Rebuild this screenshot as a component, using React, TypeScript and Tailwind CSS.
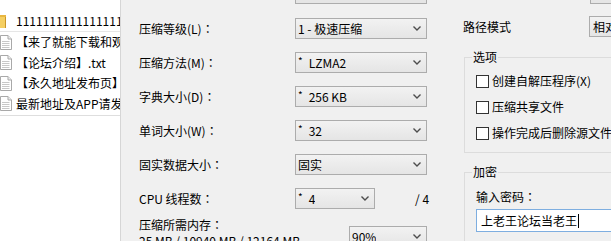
import React from 'react';

const FONT = { fontFamily: '"Noto Sans CJK SC", "Noto Sans", sans-serif' };

// full-width colon, centred like the Windows UI font does it
function Colon() {
  return <span style={{ fontFamily: '"Noto Sans CJK JP", sans-serif' }}>：</span>;
}

function Chevron() {
  return (
    <svg width="8" height="5" viewBox="0 0 8 5" className="shrink-0">
      <path d="M0.5 0.5 L4 4 L7.5 0.5" fill="none" stroke="#4d4d4d" strokeWidth="1.4" />
    </svg>
  );
}

function Select({ value, width, star }: { value: string; width: string; star?: boolean }) {
  return (
    <div
      className={`${width} h-[21px] shrink-0 flex items-center justify-between pl-[2px] pr-[5px] border border-[#acacac] bg-linear-to-b from-[#f2f2f2] to-[#e5e5e5]`}
    >
      <span className="flex items-center whitespace-nowrap overflow-hidden leading-none">
        {star && <span className="mr-[6px] text-[10px] -mt-[3px]">*</span>}
        {value}
      </span>
      <Chevron />
    </div>
  );
}

function FolderIcon() {
  return (
    <svg width="7" height="14" viewBox="0 0 7 14">
      <rect x="0" y="1" width="6" height="13" fill="#e8b640" />
      <rect x="0" y="3" width="6" height="11" fill="#f5cf62" />
      <rect x="5" y="3" width="1" height="11" fill="#c9962b" />
    </svg>
  );
}

function FileIcon() {
  return (
    <svg width="12" height="15" viewBox="0 0 12 15">
      <path d="M0.5 0.5 H8 L11.5 4 V14.5 H0.5 Z" fill="#fff" stroke="#a9a9a9" />
      <path d="M8 0.5 V4 H11.5" fill="#eee" stroke="#a9a9a9" />
      <path d="M2 6.5 H9.5 M2 8.5 H9.5 M2 10.5 H9.5 M2 12.5 H9.5" stroke="#c8c8c8" />
    </svg>
  );
}

const files = ['【来了就能下载和观看】', '【论坛介绍】.txt', '【永久地址发布页】', '最新地址及APP请发布页'];

function Row({ label, children }: { label: string; children: React.ReactNode }) {
  return (
    <div className="flex items-center h-[21px]">
      <span className="w-[156px] shrink-0 whitespace-nowrap">
        {label}
        <Colon />
      </span>
      {children}
    </div>
  );
}

function CheckRow({ label }: { label: string }) {
  return (
    <div className="flex items-center h-[16px] gap-[3px]">
      <div className="w-[13px] h-[13px] border border-[#333] bg-white shrink-0" />
      <span className="whitespace-nowrap">{label}</span>
    </div>
  );
}

export default function App() {
  return (
    <div
      className="flex w-[611px] h-[241px] overflow-hidden bg-[#f0f0f0] text-[12px] leading-[16px] text-black"
      style={FONT}
    >
      {/* file list */}
      <div className="w-[121px] shrink-0 bg-white border-r border-[#d6d6d6] pt-[11px] overflow-hidden">
        <div className="h-[21px] flex items-center border-b border-[#e6e6e6]">
          <div className="w-[16px] shrink-0 flex items-center">
            <FolderIcon />
          </div>
          <span className="whitespace-nowrap">1111111111111111111</span>
        </div>
        {files.map((f) => (
          <div key={f} className="h-[20.5px] flex items-center">
            <div className="w-[16px] shrink-0 flex items-center">
              <FileIcon />
            </div>
            <span className="whitespace-nowrap">{f}</span>
          </div>
        ))}
        <div className="mt-[1px] border-t border-[#dedede]" />
      </div>

      {/* compression settings */}
      <div className="w-[343px] shrink-0 pl-[18px]">
        <div className="ml-[156px] w-[132px] h-[4px] border-x border-b border-[#acacac] bg-[#e5e5e5]" />
        <div className="mt-[14px] flex flex-col gap-[13px]">
          <Row label="压缩等级(L)">
            <Select width="w-[132px]" value="1 - 极速压缩" />
          </Row>
          <Row label="压缩方法(M)">
            <Select width="w-[132px]" value="LZMA2" star />
          </Row>
          <Row label="字典大小(D)">
            <Select width="w-[132px]" value="256 KB" star />
          </Row>
          <Row label="单词大小(W)">
            <Select width="w-[132px]" value="32" star />
          </Row>
          <Row label="固实数据大小">
            <Select width="w-[132px]" value="固实" />
          </Row>
          <Row label="CPU 线程数">
            <Select width="w-[80px]" value="4" star />
            <span className="ml-[40px]">/ 4</span>
          </Row>
        </div>
        <div className="mt-[8px] flex">
          <div className="w-[210px] shrink-0 whitespace-nowrap">
            <div>
              压缩所需内存
              <Colon />
            </div>
            <div>25 MB / 10940 MB / 12164 MB</div>
          </div>
          <div className="mt-[9px]">
            <Select width="w-[78px]" value="90%" />
          </div>
        </div>
      </div>

      {/* right options */}
      <div className="flex-1 min-w-0">
        <div className="ml-[126px] w-[60px] h-[4px] border-l border-b border-[#acacac] bg-[#e5e5e5]" />
        <div className="mt-[12px] flex items-center h-[21px]">
          <span className="w-[126px] shrink-0 -ml-[1px]">路径模式</span>
          <div className="h-[21px] w-[60px] pl-[3px] flex items-center border-y border-l border-[#acacac] bg-linear-to-b from-[#f2f2f2] to-[#e5e5e5] whitespace-nowrap overflow-hidden">
            相对路径
          </div>
        </div>
        <fieldset className="mt-[12px] w-[170px] border border-[#dcdcdc] pl-[11px] pb-[11px]">
          <legend className="-ml-[4px] px-[1px]">选项</legend>
          <div className="pt-[8px] flex flex-col gap-[10px]">
            <CheckRow label="创建自解压程序(X)" />
            <CheckRow label="压缩共享文件" />
            <CheckRow label="操作完成后删除源文件" />
          </div>
        </fieldset>
        <fieldset className="mt-[11px] w-[170px] h-[90px] border border-[#dcdcdc] pl-[11px]">
          <legend className="-ml-[4px] px-[1px]">加密</legend>
          <div className="pt-[9px]">
            输入密码
            <Colon />
          </div>
          <div className="mt-[4px] h-[23px] w-[160px] border border-[#7eaee0] bg-white flex items-center pl-[4px]">
            <span className="whitespace-nowrap">上老王论坛当老王</span>
            <span className="ml-[1px] w-px h-[14px] bg-black" />
          </div>
        </fieldset>
      </div>
    </div>
  );
}
